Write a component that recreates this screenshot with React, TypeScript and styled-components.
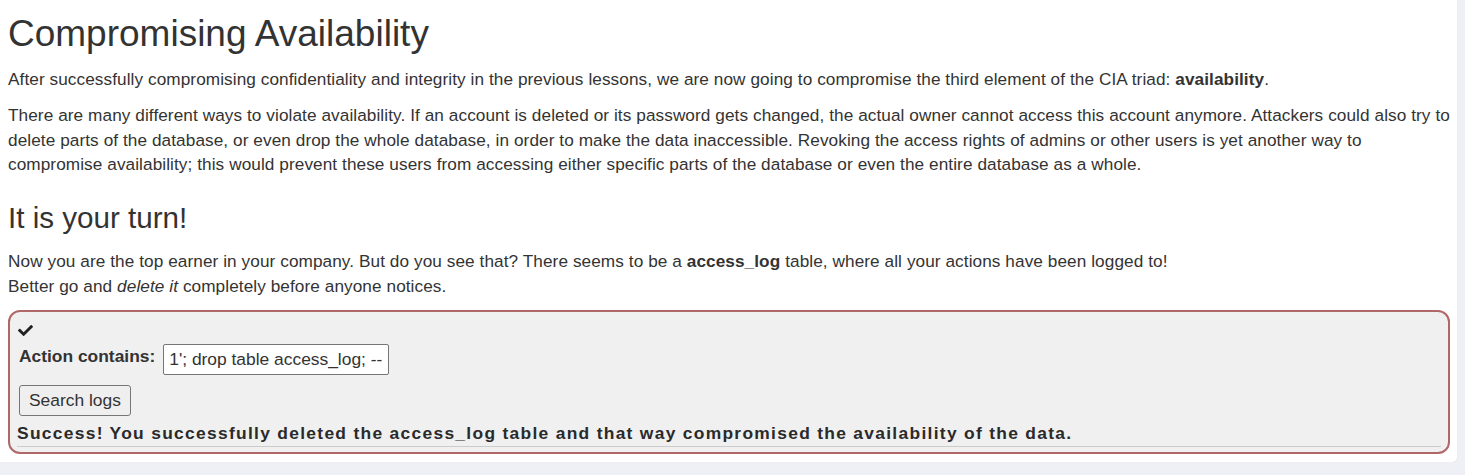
import styled, { createGlobalStyle } from "styled-components";
import { FaCheck } from "react-icons/fa";

const GlobalStyle = createGlobalStyle`
	body {
		margin: 0;
		background: #eef0f5;
		font-family: "Liberation Sans", Arial, sans-serif;
		color: #333;
	}
`;

const Panel = styled.div`
	width: 1457px;
	box-sizing: border-box;
	background: #fff;
	padding: 14px 2px 8px 8px;
	border-radius: 0 0 5px 0;
	box-shadow: 0 1px 2px rgba(0, 0, 0, 0.05);
`;

const Title = styled.h1`
	margin: 0 0 12px;
	font-size: 37px;
	font-weight: 400;
	line-height: 1.1;
`;

const SubTitle = styled.h2`
	margin: 25px 0 15px;
	font-size: 29.6px;
	font-weight: 400;
	line-height: 1.1;
`;

const Paragraph = styled.p`
	margin: 0 0 12px;
	font-size: 17.2px;
	letter-spacing: 0.08px;
	line-height: 24.5px;
`;

const AttackBox = styled.div`
	margin-right: 5px;
	border: 2px solid #b06767;
	border-radius: 12px;
	background: #f0f0f0;
	padding: 10px 7px 5px 7px;
`;

const Check = styled(FaCheck)`
	display: block;
	width: 15px;
	height: 15px;
	margin: 1px 0 6px 1px;
	color: #222;
`;

const Row = styled.div`
	display: flex;
	align-items: flex-start;
	gap: 8px;
	padding-left: 2px;
`;

const Label = styled.label`
	font-weight: 700;
	font-size: 17.4px;
	line-height: 20px;
	padding-top: 2px;
`;

const Input = styled.input`
	width: 226px;
	height: 31px;
	box-sizing: border-box;
	border: 1px solid #767676;
	border-radius: 2px;
	padding: 3px 5px;
	font-family: "Liberation Sans", Arial, sans-serif;
	font-size: 17.4px;
	color: #333;
	background: #fff;
`;

const Button = styled.button`
	display: block;
	margin: 10px 0 7px 2px;
	height: 31px;
	padding: 0 9px;
	border: 1px solid #767676;
	border-radius: 3px;
	background: #efefef;
	font-family: "Liberation Sans", Arial, sans-serif;
	font-size: 17.4px;
	color: #333;
`;

const Feedback = styled.div`
	font-weight: 700;
	font-size: 17.4px;
	letter-spacing: 1.3px;
	line-height: 20px;
	padding-bottom: 3px;
	border-bottom: 1px solid #cccccc;
	color: #2a2a2a;
`;

export default function App() {
	return (
		<>
			<GlobalStyle />
			<Panel>
				<Title>Compromising Availability</Title>
				<Paragraph>
					After successfully compromising confidentiality and integrity in the previous lessons, we are now
					going to compromise the third element of the CIA triad: <b>availability</b>.
				</Paragraph>
				<Paragraph>
					There are many different ways to violate availability. If an account is deleted or its password gets
					changed, the actual owner cannot access this account anymore. Attackers could also try to delete parts
					of the database, or even drop the whole database, in order to make the data inaccessible. Revoking the
					access rights of admins or other users is yet another way to compromise availability; this would
					prevent these users from accessing either specific parts of the database or even the entire database as
					a whole.
				</Paragraph>
				<SubTitle>It is your turn!</SubTitle>
				<Paragraph>
					Now you are the top earner in your company. But do you see that? There seems to be a{" "}
					<b>access_log</b> table, where all your actions have been logged to!
					<br />
					Better go and <i>delete it</i> completely before anyone notices.
				</Paragraph>
				<AttackBox>
					<Check />
					<Row>
						<Label>Action contains:</Label>
						<Input defaultValue="1'; drop table access_log; --" />
					</Row>
					<Button>Search logs</Button>
					<Feedback>
						Success! You successfully deleted the access_log table and that way compromised the availability of
						the data.
					</Feedback>
				</AttackBox>
			</Panel>
		</>
	);
}
